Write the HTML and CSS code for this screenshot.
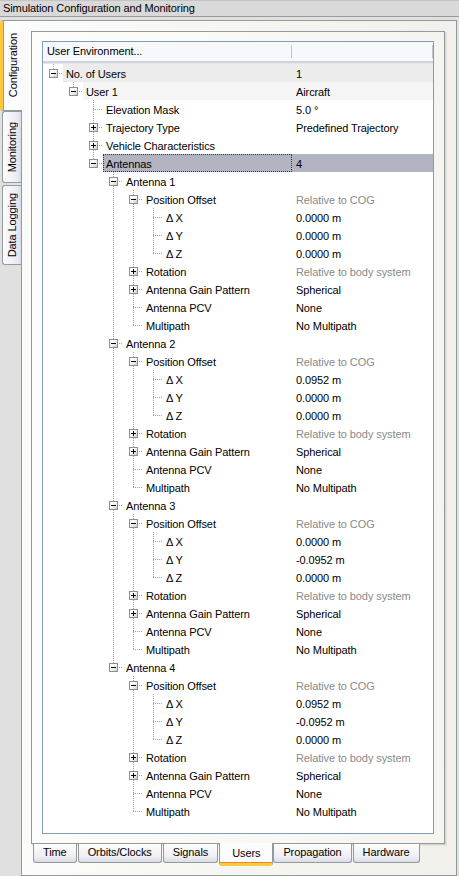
FILE: index.html
```html
<!DOCTYPE html>
<html lang="en">

<head>
  <meta charset="UTF-8">
  <title>Simulation Configuration and Monitoring</title>
  <link rel="stylesheet" href="styles.css">
</head>

<body>
  <div class="titlebar">Simulation Configuration and Monitoring</div>

  <div class="main">
    <div class="vtabs">
      <div class="vtab active"><span>Configuration</span></div>
      <div class="vtab tab-mon"><span>Monitoring</span></div>
      <div class="vtab tab-log"><span>Data Logging</span></div>
    </div>

    <div class="frame">
      <div class="page">
        <div class="tree">
          <div class="thead">
            <div class="th th-name">User Environment...</div>
            <div class="th th-val"></div>
          </div>
          <div class="rows" id="rows"></div>
        </div>
      </div>

      <div class="btabs">
        <div class="btab">Time</div>
        <div class="btab">Orbits/Clocks</div>
        <div class="btab">Signals</div>
        <div class="btab active">Users</div>
        <div class="btab">Propagation</div>
        <div class="btab">Hardware</div>
      </div>
    </div>
  </div>

  <script>
// antenna subtree, offsets in metres
function antenna(n, x, y, z) {
  return {
    name: 'Antenna ' + n, open: true, children: [
      { name: 'Position Offset', value: 'Relative to COG', muted: true, open: true, children: [
        { name: 'Δ X', value: x + ' m' },
        { name: 'Δ Y', value: y + ' m' },
        { name: 'Δ Z', value: z + ' m' }
      ] },
      { name: 'Rotation', value: 'Relative to body system', muted: true, closed: true },
      { name: 'Antenna Gain Pattern', value: 'Spherical', closed: true },
      { name: 'Antenna PCV', value: 'None' },
      { name: 'Multipath', value: 'No Multipath' }
    ]
  };
}

const tree = [
  { name: 'No. of Users', value: '1', open: true, children: [
    { name: 'User 1', value: 'Aircraft', open: true, children: [
      { name: 'Elevation Mask', value: '5.0 °' },
      { name: 'Trajectory Type', value: 'Predefined Trajectory', closed: true },
      { name: 'Vehicle Characteristics', value: '', closed: true },
      { name: 'Antennas', value: '4', open: true, selected: true, children: [
        antenna(1, '0.0000', '0.0000', '0.0000'),
        antenna(2, '0.0952', '0.0000', '0.0000'),
        antenna(3, '0.0000', '-0.0952', '0.0000'),
        antenna(4, '0.0952', '-0.0952', '0.0000')
      ] }
    ] }
  ] }
];

const list = document.getElementById('rows');

function walk(nodes, level, trail) {
  nodes.forEach((node, i) => {
    const last = i === nodes.length - 1;
    const row = document.createElement('div');
    row.className = 'row lvl' + level + (node.selected ? ' selected' : '');

    const name = document.createElement('div');
    name.className = 'name';

    // guide lines of the ancestors
    trail.forEach(more => {
      const g = document.createElement('span');
      g.className = 'g' + (more ? ' g-line' : '');
      name.appendChild(g);
    });

    const own = document.createElement('span');
    own.className = 'g g-node' + (last ? '' : ' g-more');
    if (node.open || node.closed) {
      const box = document.createElement('span');
      box.className = 'exp' + (node.open ? ' exp-open' : '');
      own.appendChild(box);
    }
    name.appendChild(own);

    const label = document.createElement('span');
    label.className = 'label';
    label.textContent = node.name;
    name.appendChild(label);

    const val = document.createElement('div');
    val.className = 'val' + (node.muted ? ' muted' : '');
    val.textContent = node.value || '';

    row.appendChild(name);
    row.appendChild(val);
    list.appendChild(row);

    if (node.open && node.children) walk(node.children, level + 1, trail.concat(!last));
  });
}

walk(tree, 0, []);
</script>
</body>

</html>
```

FILE: styles.css
```css
:root {
  --tab-border: #919b9c;
  --tree-border: #7f9db9;
  --line-color: #a0a0a0;
  --orange-light: #ffc83c;
  --orange-dark: #e68b2c;
  --selected-bg: #b2b4c1;
}

* {
  margin: 0;
  padding: 0;
  box-sizing: border-box;
}

body {
  font-family: 'Liberation Sans', Arial, sans-serif;
  font-size: 11px;
  letter-spacing: -0.1px;
  color: #000;
  background-color: #e0e0e0;
  width: 459px;
  height: 876px;
  overflow: hidden;
}

.titlebar {
  height: 17px;
  line-height: 15px;
  padding-left: 3px;
  background-color: #d9d9d9;
  border-top: 1px solid #c4c4c4;
  border-bottom: 1px solid #9a9a9a;
  white-space: nowrap;
}

.main {
  display: flex;
  padding-top: 3px;
}

/* vertical tabs on the left */
.vtabs {
  width: 21px;
  flex: none;
  display: flex;
  flex-direction: column;
}

.vtab {
  display: flex;
  align-items: center;
  justify-content: center;
  margin-left: 2px;
  width: 19px;
  border: 1px solid var(--tab-border);
  border-right: none;
  border-radius: 3px 0 0 3px;
  background: linear-gradient(to right, #fdfdfe, #ebebf3 75%, #dcdce8);
}

.vtab span {
  writing-mode: vertical-rl;
  transform: rotate(180deg);
  white-space: nowrap;
}

.vtab.active {
  position: relative;
  z-index: 1;
  margin-left: 0;
  width: 22px;
  height: 91px;
  background: #fcfcfe;
  border-left: 3px solid var(--orange-light);
  box-shadow: inset 1px 0 0 var(--orange-dark);
}

.tab-mon {
  height: 72px;
}

.tab-log {
  height: 80px;
  margin-top: 2px;
}

/* page of the vertical tab control */
.frame {
  width: 436px;
  height: 856px;
  border: 1px solid var(--tab-border);
  background: linear-gradient(to right, #fbfbf9, #f1f0ea);
  padding: 10px 0 0 9px;
}

.page {
  width: 414px;
  height: 813px;
  border: 1px solid var(--tab-border);
  box-shadow: 1px 1px 0 #d8d7cf, 2px 2px 0 #e4e3dc;
  background: linear-gradient(to right, #fdfdfb, #f5f4ef);
  padding: 9px 10px;
}

.tree {
  width: 392px;
  height: 793px;
  border: 1px solid var(--tree-border);
  background: #fff;
}

.thead {
  display: flex;
  height: 22px;
  background: linear-gradient(to bottom, #f7f8fc 0 19px, #d2d2dc 19px 21px, #e4e4ec 21px);
}

.th {
  position: relative;
  line-height: 19px;
  padding-left: 4px;
}

.th::after {
  content: "";
  position: absolute;
  right: 0;
  top: 3px;
  height: 13px;
  width: 1px;
  background: #c4c4c8;
}

.th-name {
  width: 249px;
}

.th-val {
  flex: 1;
}

/* tree rows */
.row {
  display: flex;
  height: 18px;
  line-height: 18px;
}

.name {
  width: 249px;
  flex: none;
  display: flex;
}

.label,
.val {
  height: 18px;
  padding-top: 1px;
  white-space: nowrap;
}

.label {
  flex: 1;
  padding-left: 3px;
}

.val {
  flex: 1;
  padding-left: 4px;
}

.val.muted {
  color: #8a8a8a;
}

.lvl0 .label,
.lvl0 .val {
  background-color: #ececec;
}

.lvl1 .label,
.lvl1 .val {
  background-color: #f5f5f5;
}

.selected .label,
.selected .val {
  background-color: var(--selected-bg);
}

.selected .label {
  outline: 1px dotted #333;
  outline-offset: -1px;
}

.g {
  display: block;
  width: 20px;
  height: 18px;
  flex: none;
  background-repeat: no-repeat;
}

.g-line {
  background-image: repeating-linear-gradient(to bottom, var(--line-color) 0 1px, transparent 1px 2px);
  background-size: 1px 18px;
  background-position: 10px 0;
}

.g-node {
  background-image:
    repeating-linear-gradient(to bottom, var(--line-color) 0 1px, transparent 1px 2px),
    repeating-linear-gradient(to right, var(--line-color) 0 1px, transparent 1px 2px);
  background-size: 1px 9px, 10px 1px;
  background-position: 10px 0, 10px 9px;
}

.g-node.g-more {
  background-size: 1px 18px, 10px 1px;
}

.exp {
  display: block;
  position: relative;
  width: 9px;
  height: 9px;
  margin: 5px 0 0 6px;
  border: 1px solid #8f8f8f;
  background: linear-gradient(135deg, #fff 35%, #cfcfc8);
}

.exp::before,
.exp::after {
  content: "";
  position: absolute;
  background: #000;
}

.exp::before {
  left: 1px;
  top: 3px;
  width: 5px;
  height: 1px;
}

.exp::after {
  left: 3px;
  top: 1px;
  width: 1px;
  height: 5px;
}

.exp-open::after {
  display: none;
}

/* bottom tabs */
.btabs {
  display: flex;
  align-items: flex-start;
  margin-left: 2px;
}

.btab {
  height: 19px;
  line-height: 17px;
  padding: 0 9px;
  margin-right: 1px;
  border: 1px solid var(--tab-border);
  border-top: none;
  border-radius: 0 0 3px 3px;
  background: linear-gradient(to bottom, #fefefe, #eeeef4 70%, #dcdce6);
  white-space: nowrap;
}

.btab.active {
  height: 23px;
  line-height: 21px;
  margin: -1px 0 0 0;
  padding: 0 12px;
  background: #fcfcfe;
  border-bottom: 3px solid var(--orange-light);
  box-shadow: inset 0 -1px 0 var(--orange-dark);
}
```
